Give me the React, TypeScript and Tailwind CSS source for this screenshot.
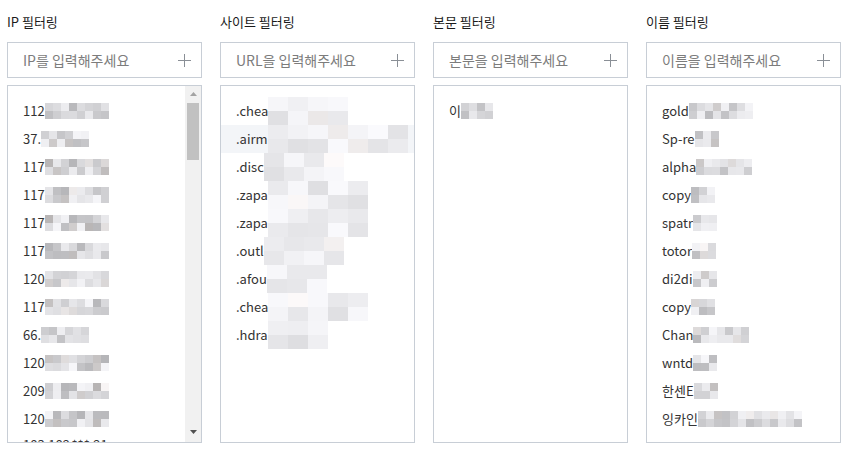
import React, { FC } from "react";

/**
 * Small seeded generator so the blurred (mosaic) blocks look the same every render
 */
const makeRand = (seed: number) => {
  let s = seed >>> 0;
  return () => {
    s = (s + 0x6d2b79f5) >>> 0;
    let t = s;
    t = Math.imul(t ^ (t >>> 15), t | 1);
    t ^= t + Math.imul(t ^ (t >>> 7), t | 61);
    return ((t ^ (t >>> 14)) >>> 0) / 4294967296;
  };
};

interface MosaicProps {
  seed: number;
  cols: number;
  cellW: number;
  cellH: number;
  rows?: number;
  min?: number;
  max?: number;
}

/**
 * Pixelated block that stands in for the masked part of an entry
 */
const Mosaic: FC<MosaicProps> = ({ seed, cols, cellW, cellH, rows = 2, min = 196, max = 250 }) => {
  const r = makeRand(seed);
  const cells: string[] = [];
  for (let i = 0; i < rows * cols; i++) {
    const v = Math.round(min + r() * (max - min));
    const warm = r() > 0.9 ? 3 : 0;
    cells.push(`rgb(${Math.min(255, v + warm)}, ${v}, ${Math.min(255, v + 3 - warm)})`);
  }
  return (
    <span className="inline-flex flex-col shrink-0">
      {Array.from({ length: rows }).map((_, ri) => (
        <span key={ri} className="flex">
          {Array.from({ length: cols }).map((_, ci) => (
            <span
              key={ci}
              style={{ width: cellW, height: cellH, backgroundColor: cells[ri * cols + ci] }}
            />
          ))}
        </span>
      ))}
    </span>
  );
};

interface Entry {
  text: string;
  cols: number;
  highlight?: boolean;
}

interface FilterColumnProps {
  title: string;
  placeholder: string;
  entries: Entry[];
  cellW: number;
  cellH: number;
  rows?: number;
  min?: number;
  max?: number;
  seed: number;
  scroll?: boolean;
  tail?: string;
}

const PlusIcon: FC = () => (
  <svg width="13" height="13" viewBox="0 0 13 13" className="shrink-0">
    <path d="M6.5 0v13M0 6.5h13" stroke="#8a8f96" strokeWidth="1" />
  </svg>
);

/**
 * Fake classic scrollbar (track, arrows and thumb)
 */
const ScrollBar: FC = () => (
  <div className="w-[16px] shrink-0 bg-[#f1f1f1] flex flex-col items-center">
    <div className="h-[16px] flex items-center justify-center">
      <svg width="7" height="4" viewBox="0 0 7 4">
        <path d="M0 4L3.5 0L7 4Z" fill="#a3a3a3" />
      </svg>
    </div>
    <div className="w-[12px] h-[57px] mt-[1px] bg-[#c1c1c1]" />
    <div className="flex-1" />
    <div className="h-[16px] flex items-center justify-center mb-[2px]">
      <svg width="7" height="4" viewBox="0 0 7 4">
        <path d="M0 0L3.5 4L7 0Z" fill="#505050" />
      </svg>
    </div>
  </div>
);

const FilterColumn: FC<FilterColumnProps> = ({
  title,
  placeholder,
  entries,
  cellW,
  cellH,
  rows,
  min,
  max,
  seed,
  scroll,
  tail,
}) => {
  return (
    <div className="flex flex-col">
      <h2 className="h-[32px] pt-[12px] text-[13px] leading-[20px] text-[#1b1b1b]">{title}</h2>
      <div className="mt-[10px] h-[36px] border border-[#c8ced6] flex items-center justify-between pl-[15px] pr-[10px]">
        <span className="text-[14px] text-[#7c7c7c]">{placeholder}</span>
        <PlusIcon />
      </div>
      <div className="mt-[7px] h-[358px] border border-[#c8ced6] flex overflow-hidden">
        <ul className="flex-1 pt-[11px] overflow-hidden">
          {entries.map((e, i) => (
            <li
              key={i}
              className={`h-[28px] pl-[15px] flex items-center text-[13px] text-[#333] whitespace-nowrap ${
                e.highlight ? "bg-[#f3f5f8]" : ""
              }`}
            >
              <span>{e.text}</span>
              <Mosaic
                seed={seed + i * 17}
                cols={e.cols}
                cellW={cellW}
                cellH={cellH}
                rows={rows}
                min={min}
                max={max}
              />
            </li>
          ))}
          {tail && (
            <li className="h-[28px] pl-[15px] pb-[5px] flex items-center text-[13px] text-[#333]">{tail}</li>
          )}
        </ul>
        {scroll && <ScrollBar />}
      </div>
    </div>
  );
};

const ipEntries: Entry[] = [
  { text: "112", cols: 8 },
  { text: "37.", cols: 6 },
  { text: "117", cols: 8 },
  { text: "117", cols: 8 },
  { text: "117", cols: 8 },
  { text: "117", cols: 8 },
  { text: "120", cols: 8 },
  { text: "117", cols: 8 },
  { text: "66.", cols: 6 },
  { text: "120", cols: 8 },
  { text: "209", cols: 8 },
  { text: "120", cols: 8 },
];

const siteEntries: Entry[] = [
  { text: ".chea", cols: 4 },
  { text: ".airm", cols: 7, highlight: true },
  { text: ".disc", cols: 4 },
  { text: ".zapa", cols: 5 },
  { text: ".zapa", cols: 5 },
  { text: ".outl", cols: 4 },
  { text: ".afou", cols: 3 },
  { text: ".chea", cols: 5 },
  { text: ".hdra", cols: 3 },
];

const bodyEntries: Entry[] = [{ text: "이", cols: 4 }];

const nameEntries: Entry[] = [
  { text: "gold", cols: 8 },
  { text: "Sp-re", cols: 3 },
  { text: "alpha", cols: 7 },
  { text: "copy", cols: 3 },
  { text: "spatr", cols: 3 },
  { text: "totor", cols: 3 },
  { text: "di2di", cols: 3 },
  { text: "copy", cols: 3 },
  { text: "Chan", cols: 7 },
  { text: "wntd", cols: 3 },
  { text: "한센E", cols: 3 },
  { text: "잉카인", cols: 13 },
];

/**
 * Filter settings page
 */
const App: FC = () => {
  return (
    <div
      className="w-[846px] h-[452px] bg-white overflow-hidden"
      style={{ fontFamily: '"Noto Sans CJK KR", "Noto Sans", sans-serif' }}
    >
      <div className="ml-[7px] w-[834px] grid grid-cols-4 gap-[18px]">
        <FilterColumn
          title="IP 필터링"
          placeholder="IP를 입력해주세요"
          entries={ipEntries}
          cellW={8}
          cellH={8}
          min={180}
          max={246}
          seed={11}
          scroll
          tail="183.182.***.21"
        />
        <FilterColumn
          title="사이트 필터링"
          placeholder="URL을 입력해주세요"
          entries={siteEntries}
          cellW={20}
          cellH={14}
          min={222}
          max={250}
          seed={41}
        />
        <FilterColumn
          title="본문 필터링"
          placeholder="본문을 입력해주세요"
          entries={bodyEntries}
          cellW={8}
          cellH={8}
          min={190}
          max={236}
          seed={77}
        />
        <FilterColumn
          title="이름 필터링"
          placeholder="이름을 입력해주세요"
          entries={nameEntries}
          cellW={8}
          cellH={8}
          min={185}
          max={246}
          seed={93}
        />
      </div>
    </div>
  );
};

export default App;
